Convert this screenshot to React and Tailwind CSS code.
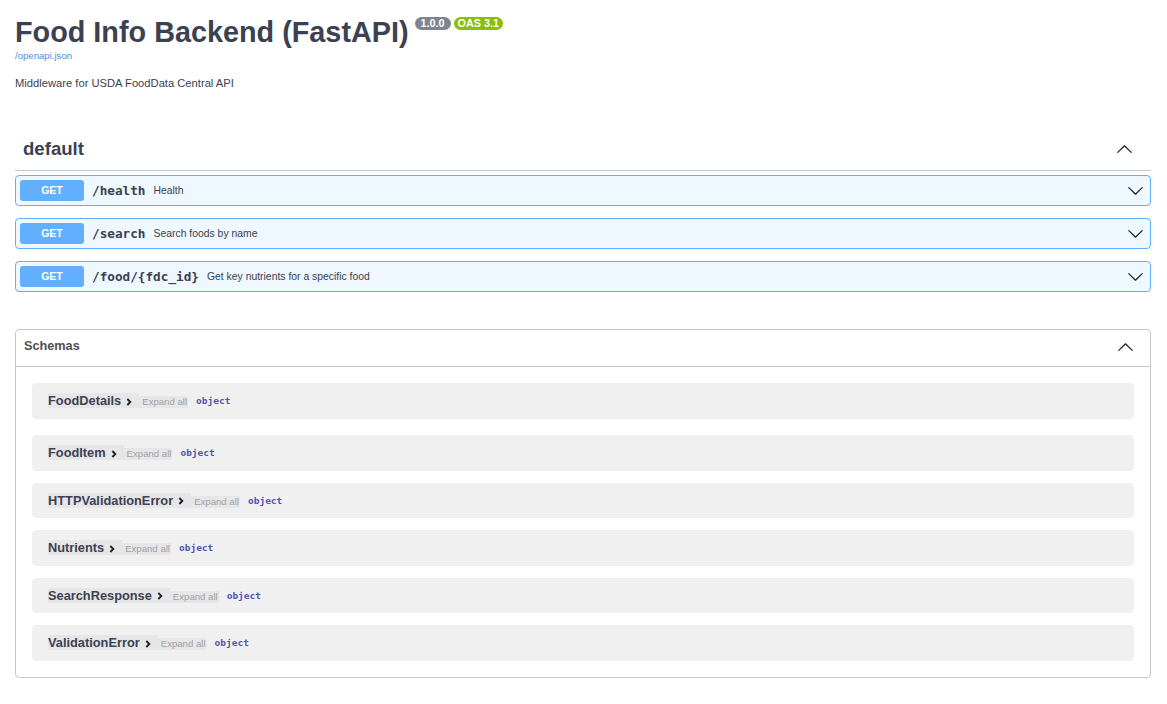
import React from 'react';

const ARROW =
  'M17.418 6.109c.272-.268.709-.268.979 0s.271.701 0 .969l-7.908 7.83c-.27.268-.707.268-.979 0l-7.908-7.83c-.27-.268-.27-.701 0-.969.271-.268.709-.268.979 0L10 13.25l7.418-7.141z';

const Arrow = ({ className }) => (
  <svg viewBox="0 0 20 20" fill="currentColor" className={className}>
    <path d={ARROW} />
  </svg>
);

const ops = [
  { path: '/health', summary: 'Health' },
  { path: '/search', summary: 'Search foods by name' },
  { path: '/food/{fdc_id}', summary: 'Get key nutrients for a specific food' },
];

const schemas = ['FoodDetails', 'FoodItem', 'HTTPValidationError', 'Nutrients', 'SearchResponse', 'ValidationError'];

const App = () => {
  return (
    <div className="min-h-screen bg-white pl-[15px] pr-[16px] font-['Liberation_Sans',Arial,sans-serif] text-[#3b4151]">
      {/* info */}
      <div className="pt-[14px]">
        <div className="flex items-start">
          <h2 className="text-[28.8px] leading-[36px] font-bold">Food Info Backend (FastAPI)</h2>
          <span className="ml-[6px] mt-[3px] rounded-full bg-[#7d8492] px-[6px] text-[10.8px] font-bold leading-[13px] text-white">1.0.0</span>
          <span className="ml-[3px] mt-[3px] rounded-full bg-[#89bf04] px-[4px] text-[10.8px] font-bold leading-[13px] text-white">OAS 3.1</span>
        </div>
        <a className="block text-[9.6px] leading-[12px] text-[#4990e2]">/openapi.json</a>
        <p className="mt-[13px] text-[11.2px] leading-[16px]">Middleware for USDA FoodData Central API</p>
      </div>

      {/* tag */}
      <div className="mt-[39px] flex h-[41px] items-center border-b border-[#c4c6cb] pb-[2px] pl-2 pr-[18px]">
        <h3 className="text-[18.6px] font-bold leading-[24px]">default</h3>
        <Arrow className="ml-auto h-[17px] w-[17px] rotate-180 text-[#222]" />
      </div>

      <div className="mt-[4px] flex flex-col gap-[12px]">
        {ops.map(op => (
          <div key={op.path} className="flex items-center rounded-[4px] border border-[#61affe] bg-[#eff7ff] p-[4px]">
            <span className="flex h-[21px] w-[64px] items-center justify-center rounded-[3px] bg-[#61affe] text-[10.5px] font-bold text-white">GET</span>
            <span className="ml-[8px] mb-[1px] font-['DejaVu_Sans_Mono',monospace] text-[12.7px] font-bold leading-[15px]">{op.path}</span>
            <span className="ml-[8px] text-[10.4px]">{op.summary}</span>
            <Arrow className="ml-auto mr-[2px] h-[17px] w-[17px] text-[#222]" />
          </div>
        ))}
      </div>

      {/* schemas */}
      <section className="mt-[37px] rounded-[4px] border border-[#c4c6cb]">
        <div className="flex h-[37px] items-center border-b border-[#c4c6cb] pb-[2px] pl-2 pr-[16px]">
          <h4 className="text-[12.7px] font-bold text-[#505050]">Schemas</h4>
          <Arrow className="ml-auto h-[17px] w-[17px] rotate-180 text-[#222]" />
        </div>
        <div className="flex flex-col gap-[12px] px-[16px] pb-[16px] pt-[16px]">
          {schemas.map((name, i) => (
            <div key={name} className={`flex h-[35.5px] items-center rounded-[4px] bg-[#f0f0f0] px-[16px] ${i === 0 ? 'mb-[4.5px]' : ''}`}>
              <span className="flex h-[15px] items-center bg-[#e6e6e9] pr-[2px]">
                <span className="text-[12.8px] font-bold leading-[15px]">{name}</span>
                <svg viewBox="0 0 24 24" className="mt-[2px] h-[16px] w-[16px] text-[#222]" fill="none" stroke="currentColor" strokeWidth="2.8">
                  <polyline points="9.5,7.5 14,12 9.5,16.5" />
                </svg>
              </span>
              <span className="mt-[3px] h-[12px] bg-[#e6e6e9] pl-[3px] pr-[1px] text-[9.6px] leading-[12px] text-[#a0a0a0]">Expand all</span>
              <span className="ml-[8px] mt-[1px] font-['DejaVu_Sans_Mono',monospace] text-[9.5px] font-bold leading-[12px] text-[#55a]">object</span>
            </div>
          ))}
        </div>
      </section>
    </div>
  );
};

export default App;
